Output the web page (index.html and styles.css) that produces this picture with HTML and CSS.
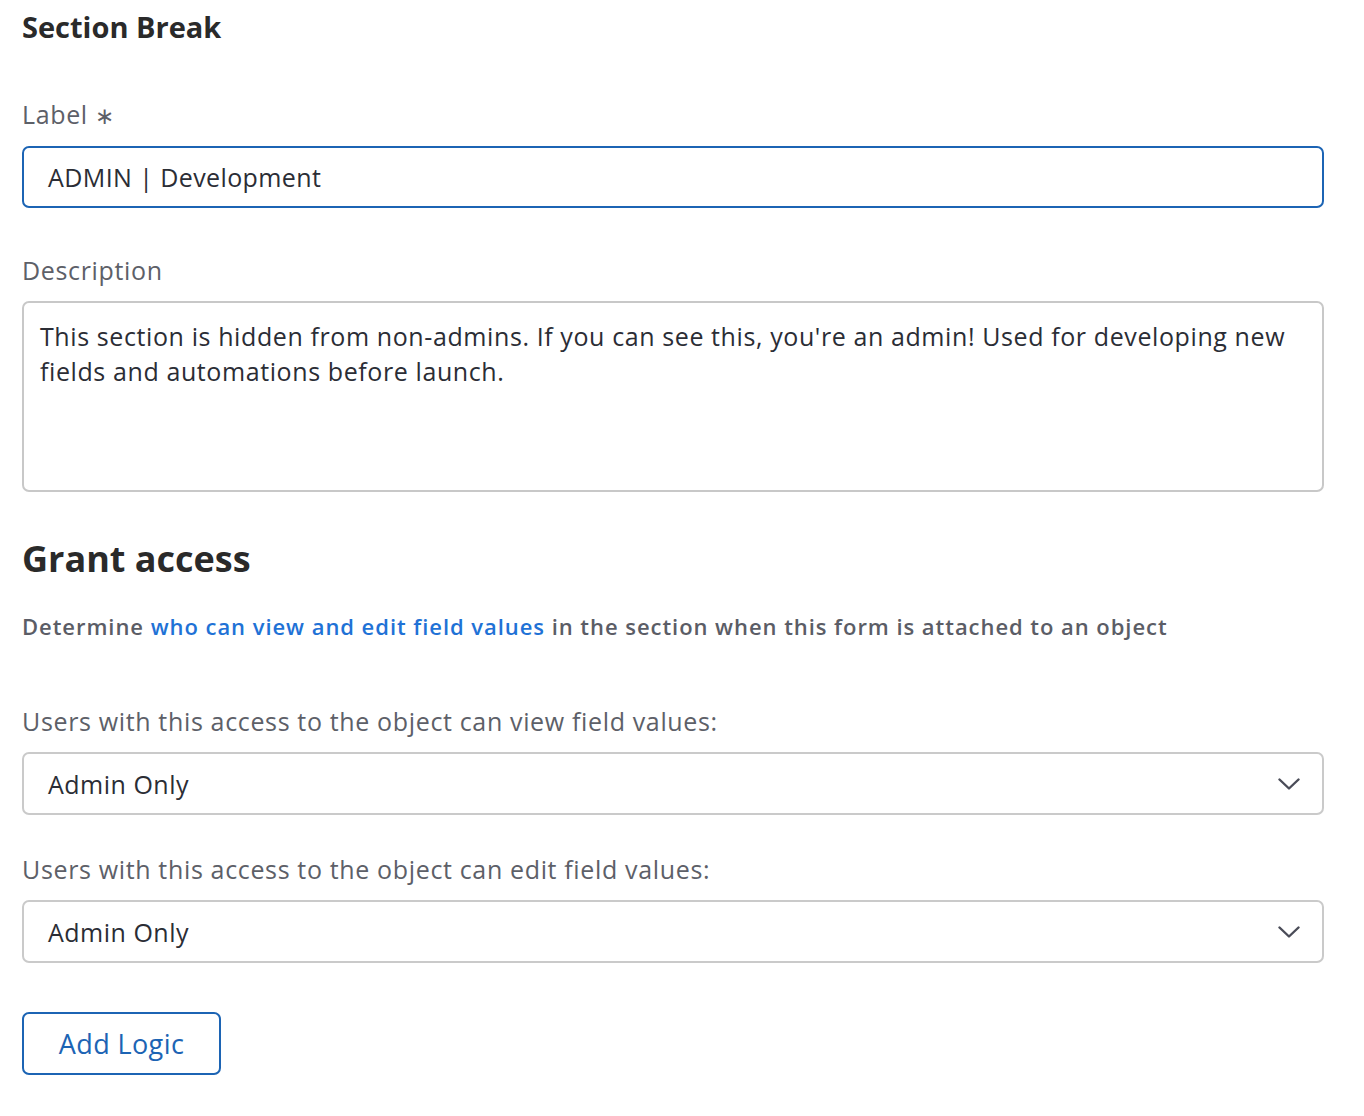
FILE: index.html
```html
<!DOCTYPE html>
<html>
<head>
<meta charset="utf-8">
<link rel="stylesheet" href="styles.css">
</head>
<body>
<div class="page">
  <h2 class="section-title">Section Break</h2>

  <div class="field field-label">
    <label class="label">Label <span class="req">&#8727;</span></label>
    <div class="input focused">ADMIN | Development</div>
  </div>

  <div class="field field-desc">
    <label class="label">Description</label>
    <div class="textarea">This section is hidden from non-admins. If you can see this, you're an admin! Used for developing new fields and automations before launch.</div>
  </div>

  <h1 class="grant-title">Grant access</h1>
  <p class="grant-desc">Determine <a class="link">who can view and edit field values</a> in the section when this form is attached to an object</p>

  <div class="field field-view">
    <label class="label">Users with this access to the object can view field values:</label>
    <div class="select">
      <span>Admin Only</span>
      <svg class="chev" width="22" height="14" viewBox="0 0 22 14"><path d="M1.5 2.5 L11 11.5 L20.5 2.5" fill="none" stroke="#4a4c58" stroke-width="2.4" stroke-linecap="round" stroke-linejoin="round"/></svg>
    </div>
  </div>

  <div class="field field-edit">
    <label class="label">Users with this access to the object can edit field values:</label>
    <div class="select">
      <span>Admin Only</span>
      <svg class="chev" width="22" height="14" viewBox="0 0 22 14"><path d="M1.5 2.5 L11 11.5 L20.5 2.5" fill="none" stroke="#4a4c58" stroke-width="2.4" stroke-linecap="round" stroke-linejoin="round"/></svg>
    </div>
  </div>

  <button class="btn">Add Logic</button>
</div>
</body>
</html>
```
FILE: styles.css
```css
html, body {
  margin: 0;
  padding: 0;
  background: #ffffff;
}
body {
  font-family: "Open Sans", "Lato", sans-serif;
  color: #2b2d35;
  font-variant-ligatures: none;
}
.page {
  padding: 6px 40px 0 22px;
  display: flex;
  flex-direction: column;
  align-items: stretch;
}
.section-title {
  margin: 0;
  font-size: 29px;
  font-weight: 700;
  color: #2a2a2a;
  line-height: 42px;
}
.field {
  display: flex;
  flex-direction: column;
}
.field-label { margin-top: 51px; }
.field-desc { margin-top: 47px; }
.label {
  font-size: 25px;
  letter-spacing: 0.65px;
  color: #5d6068;
  line-height: 30px;
  margin-bottom: 16px;
}
.req {
  font-size: 23px;
  color: #5d6068;
}
.input {
  height: 62px;
  box-sizing: border-box;
  border: 2px solid #1c64b4;
  border-radius: 7px;
  padding: 0 24px;
  display: flex;
  align-items: center;
  font-size: 25px;
  letter-spacing: 0.4px;
  color: #2b2d35;
}
.textarea {
  height: 191px;
  box-sizing: border-box;
  border: 2px solid #c8c8c8;
  border-radius: 7px;
  padding: 16px 16px;
  font-size: 25px;
  letter-spacing: 0.6px;
  line-height: 35px;
  color: #2b2d35;
}
.grant-title {
  margin: 43px 0 0 0;
  font-size: 36px;
  font-weight: 700;
  color: #2a2a2a;
  line-height: 48px;
}
.grant-desc {
  margin: 28px 0 0 0;
  font-size: 22px;
  font-weight: 600;
  letter-spacing: 0.95px;
  color: #5b5d66;
  line-height: 30px;
}
.link {
  color: #1f72d6;
  text-decoration: none;
}
.field-view { margin-top: 65px; }
.field-edit { margin-top: 39px; }
.select {
  height: 63px;
  box-sizing: border-box;
  border: 2px solid #cacaca;
  border-radius: 7px;
  padding: 0 22px 0 24px;
  display: flex;
  align-items: center;
  justify-content: space-between;
  font-size: 25px;
  letter-spacing: 0.5px;
  color: #2b2d35;
}
.btn {
  margin-top: 49px;
  align-self: flex-start;
  width: 199px;
  height: 63px;
  box-sizing: border-box;
  background: #ffffff;
  border: 2px solid #1c64b4;
  border-radius: 7px;
  font-family: "Open Sans", "Lato", sans-serif;
  font-size: 27px;
  letter-spacing: 0.4px;
  color: #1c64b4;
  padding: 0;
}
```
